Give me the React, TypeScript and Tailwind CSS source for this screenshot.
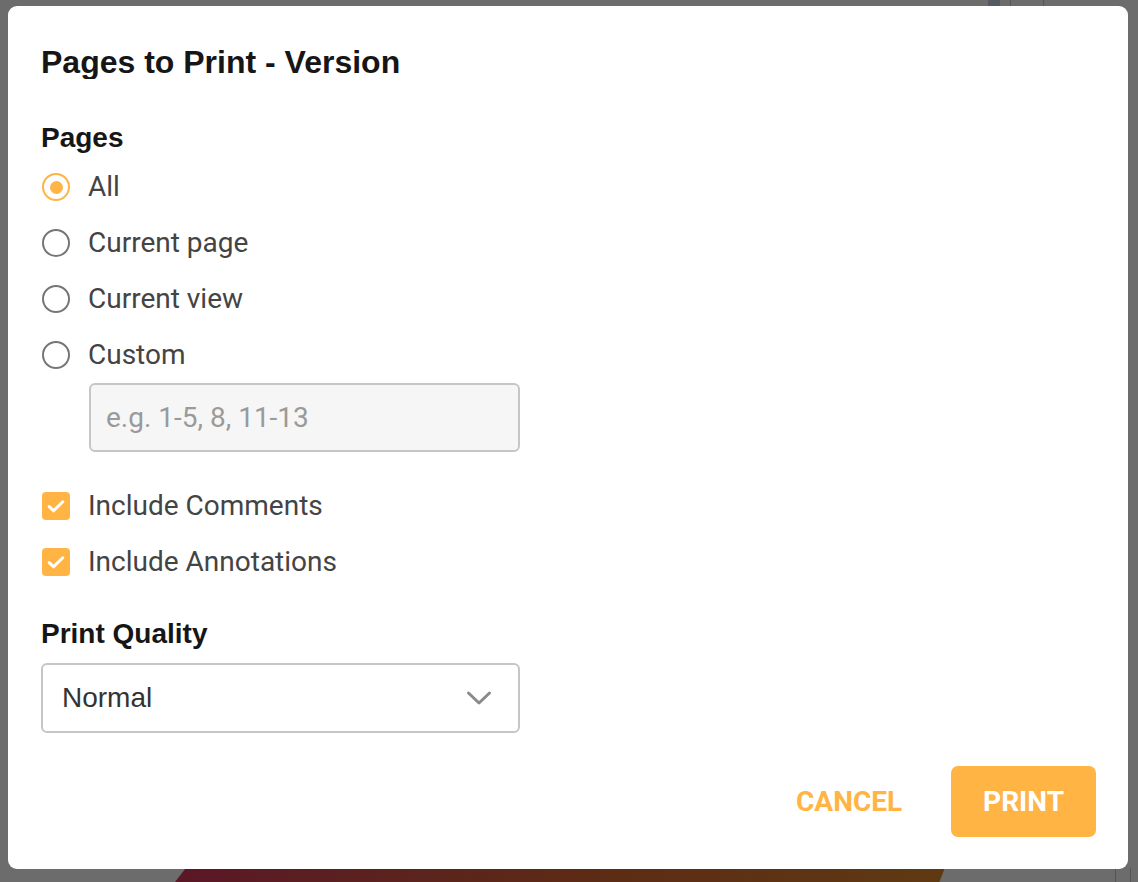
import { useState } from "react";

const ORANGE = "#ffb443";

const pageOptions = ["All", "Current page", "Current view", "Custom"];

function Radio({ checked }: { checked: boolean }) {
  return (
    <span
      className={`flex h-[28px] w-[28px] shrink-0 items-center justify-center rounded-full border-[2.5px] ${
        checked ? "border-[#ffb443]" : "border-[#767676]"
      }`}
    >
      {checked && <span className="h-[13px] w-[13px] rounded-full bg-[#ffb443]" />}
    </span>
  );
}

function Checkbox() {
  return (
    <span className="flex h-[28px] w-[28px] shrink-0 items-center justify-center rounded-[4px] bg-[#ffb443]">
      <svg width="20" height="20" viewBox="0 0 20 20" fill="none">
        <path
          d="M3.2 10.6l4.4 4.2L16.8 5.8"
          stroke="white"
          strokeWidth="3"
          strokeLinecap="round"
          strokeLinejoin="round"
        />
      </svg>
    </span>
  );
}

export default function App() {
  const [selected, setSelected] = useState("All");

  return (
    <div className="relative h-[882px] w-[1138px] overflow-hidden bg-[#6c6c6c]">
      {/* dimmed app behind the dialog */}
      <div className="absolute bottom-0 left-[175px] h-[40px] w-[780px] bg-gradient-to-r from-[#5a1726] via-[#5c2a16] to-[#5e3a12] [clip-path:polygon(4%_0,100%_0,98%_100%,0_100%)]" />
      <div className="absolute left-[988px] top-0 h-[12px] w-[12px] bg-[#555a60]" />
      <div className="absolute left-[1010px] top-0 h-[12px] w-[1px] bg-[#555]" />
      <div className="absolute left-[1043px] top-0 h-[12px] w-[1px] bg-[#555]" />
      <div className="absolute bottom-0 left-[1115px] h-[14px] w-[1px] bg-[#555]" />
      <div className="absolute bottom-0 left-[1130px] h-[14px] w-[1px] bg-[#555]" />

      <div className="absolute left-[8px] top-[6px] flex h-[863px] w-[1120px] flex-col rounded-[9px] bg-white pl-[33px] pr-[32px] pb-[32px] pt-[39px] font-['Liberation_Sans',Arial,sans-serif]">
        <h1 className="h-[34px] w-[361px] overflow-hidden whitespace-nowrap text-[32px] font-bold leading-[34px] text-[#161616]">
          Pages to Print - Version A
        </h1>

        <h2 className="mt-[45px] h-[28px] text-[28px] font-bold leading-[28px] text-[#161616]">
          Pages
        </h2>

        <div className="mt-[7px] flex flex-col font-['Roboto',sans-serif]">
          {pageOptions.map((opt) => (
            <button
              key={opt}
              type="button"
              onClick={() => setSelected(opt)}
              className="flex h-[56px] items-center gap-[18px] pl-[1px] text-left"
            >
              <Radio checked={selected === opt} />
              <span className="text-[28px] text-[#444]">{opt}</span>
            </button>
          ))}
        </div>

        <div className="ml-[48px] flex h-[69px] w-[431px] items-center rounded-[6px] border-2 border-[#c6c6c6] bg-[#f6f6f6] px-[15px] font-['Roboto',sans-serif]">
          <input
            className="w-full bg-transparent text-[28px] text-[#444] outline-none placeholder:text-[#9a9a9a]"
            placeholder="e.g. 1-5, 8, 11-13"
          />
        </div>

        <div className="mt-[26px] flex flex-col font-['Roboto',sans-serif]">
          {["Include Comments", "Include Annotations"].map((label) => (
            <label key={label} className="flex h-[56px] items-center gap-[18px] pl-[1px]">
              <Checkbox />
              <span className="text-[28px] text-[#444]">{label}</span>
            </label>
          ))}
        </div>

        <h2 className="mt-[30px] h-[28px] text-[28px] font-bold leading-[28px] text-[#161616]">
          Print Quality
        </h2>

        <div className="mt-[15px] flex h-[70px] w-[479px] items-center justify-between rounded-[6px] border-2 border-[#c6c6c6] bg-white pl-[19px] pr-[26px]">
          <span className="text-[28px] text-[#333]">Normal</span>
          <svg width="26" height="16" viewBox="0 0 26 16" fill="none">
            <path
              d="M2.5 3l10.5 10L23.5 3"
              stroke="#8a8a8a"
              strokeWidth="3"
              strokeLinecap="round"
              strokeLinejoin="round"
            />
          </svg>
        </div>

        <div className="mt-[33px] flex items-center justify-end gap-[33px] font-['Roboto',sans-serif]">
          <button
            type="button"
            className="h-[71px] px-[16px] text-[28px] font-bold"
            style={{ color: ORANGE }}
          >
            CANCEL
          </button>
          <button
            type="button"
            className="h-[71px] rounded-[7px] bg-[#ffb443] px-[32px] text-[28px] font-bold text-white"
          >
            PRINT
          </button>
        </div>
      </div>
    </div>
  );
}
